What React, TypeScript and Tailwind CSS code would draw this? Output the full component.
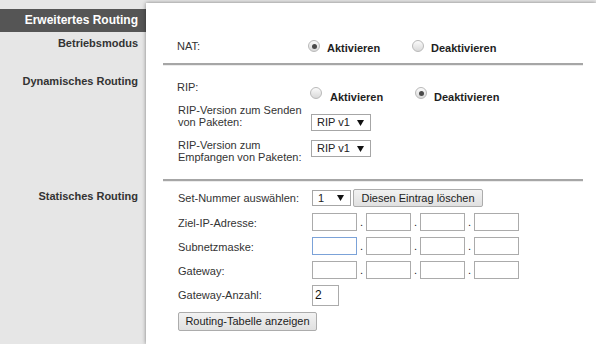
import React from "react";

function Radio({ checked }: { checked?: boolean }) {
  return (
    <span className="flex h-[12px] w-[12px] shrink-0 items-center justify-center rounded-full border border-[#b9b9b9] bg-gradient-to-b from-[#fbfbfb] to-[#d9d9d9]">
      {checked && <span className="h-[5px] w-[5px] rounded-full bg-[#4a4a4a]" />}
    </span>
  );
}

function RadioOption({
  checked,
  label,
  width,
  textOffset,
}: {
  checked?: boolean;
  label: string;
  width: string;
  textOffset: string;
}) {
  return (
    <div className={`flex items-start ${width}`}>
      <Radio checked={checked} />
      <span className={`ml-[7px] font-bold text-[#1e1e1e] ${textOffset}`}>{label}</span>
    </div>
  );
}

function Select({ value, width }: { value: string; width: string }) {
  return (
    <div className={`flex h-[17px] items-center justify-between border border-[#a6a6a6] bg-white pl-[5px] pr-[6px] text-[#222] ${width}`}>
      <span>{value}</span>
      <svg width="7" height="6" viewBox="0 0 7 6">
        <polygon points="0,0 7,0 3.5,6" fill="#111" />
      </svg>
    </div>
  );
}

function Button({ children, width }: { children: React.ReactNode; width: string }) {
  return (
    <div className={`flex items-center justify-center rounded-[2px] border border-[#acacac] bg-gradient-to-b from-[#f2f2f2] to-[#e0e0e0] text-[#222] ${width}`}>
      {children}
    </div>
  );
}

function IpRow({ label, focused }: { label: string; focused?: boolean }) {
  return (
    <div className="mt-[6px] flex h-[18px] items-center pl-[15px]">
      <span className="w-[134px] pt-[2px]">{label}</span>
      {[0, 1, 2, 3].map((i) => (
        <React.Fragment key={i}>
          {i > 0 && <span className="w-[9px] text-center text-[#222]">.</span>}
          <div
            className={`h-[18px] w-[45px] bg-white ${
              i === 0 && focused ? "border border-[#7ba2d8]" : "border border-[#ababab]"
            }`}
          />
        </React.Fragment>
      ))}
    </div>
  );
}

function Rule({ className }: { className: string }) {
  return <div className={`h-[3px] border-t-2 border-b border-t-[#a6a6a6] border-b-[#ececec] ${className}`} />;
}

export default function App() {
  return (
    <div className="flex h-[344px] w-[596px] overflow-hidden bg-[#e6e6e6] font-['Liberation_Sans',Arial,sans-serif] text-[11px] leading-[13px] text-[#333]">
      <div className="w-[146px] shrink-0 pt-[9px] text-right font-bold">
        <div className="h-[23px] bg-[#555] pr-[8px] pt-[4px] text-[12px] leading-[14px] text-white">
          Erweitertes Routing
        </div>
        <div className="mt-[5px] pr-[8px]">Betriebsmodus</div>
        <div className="mt-[25px] pr-[8px]">Dynamisches Routing</div>
        <div className="mt-[102px] pr-[8px]">Statisches Routing</div>
      </div>

      <div className="mt-[3px] flex-1 bg-white pl-[17px] pr-[13px] pt-[37px] shadow-[0_0_4px_rgba(0,0,0,0.45)]">
        <div className="flex h-[13px] items-start pl-[14px]">
          <span className="w-[131px]">NAT:</span>
          <RadioOption checked label="Aktivieren" width="w-[104px]" textOffset="mt-[2px]" />
          <RadioOption label="Deaktivieren" width="" textOffset="mt-[2px]" />
        </div>

        <Rule className="mt-[10px]" />

        <div className="mt-[15px] flex h-[23px] items-start pl-[14px]">
          <span className="w-[133px]">RIP:</span>
          <div className="mt-[6px] flex">
            <RadioOption label="Aktivieren" width="w-[105px]" textOffset="ml-[8px] mt-[4px]" />
            <RadioOption checked label="Deaktivieren" width="" textOffset="mt-[4px]" />
          </div>
        </div>

        <div className="flex h-[35px] items-start pl-[15px]">
          <span className="w-[133px] leading-[12px]">
            RIP-Version zum Senden
            <br />
            von Paketen:
          </span>
          <div className="mt-[10px]">
            <Select value="RIP v1" width="w-[60px]" />
          </div>
        </div>

        <div className="flex h-[26px] items-start pl-[15px]">
          <span className="w-[133px] leading-[12px]">
            RIP-Version zum
            <br />
            Empfangen von Paketen:
          </span>
          <div className="mt-[1px]">
            <Select value="RIP v1" width="w-[60px]" />
          </div>
        </div>

        <Rule className="mt-[14px]" />

        <div className="mt-[7px] flex h-[18px] items-center pl-[15px]">
          <span className="w-[134px]">Set-Nummer auswählen:</span>
          <Select value="1" width="w-[39px] !h-[16px]" />
          <div className="ml-[2px]">
            <Button width="h-[18px] w-[130px]">Diesen Eintrag löschen</Button>
          </div>
        </div>

        <IpRow label="Ziel-IP-Adresse:" />
        <IpRow label="Subnetzmaske:" focused />
        <IpRow label="Gateway:" />

        <div className="mt-[6px] flex h-[21px] items-center pl-[15px]">
          <span className="w-[134px]">Gateway-Anzahl:</span>
          <div className="flex h-[21px] w-[27px] items-center border border-[#ababab] bg-white pl-[2px] text-[12px] text-[#111]">
            2
          </div>
        </div>

        <div className="mt-[6px] pl-[15px]">
          <Button width="h-[19px] w-[139px]">Routing-Tabelle anzeigen</Button>
        </div>
      </div>
    </div>
  );
}
